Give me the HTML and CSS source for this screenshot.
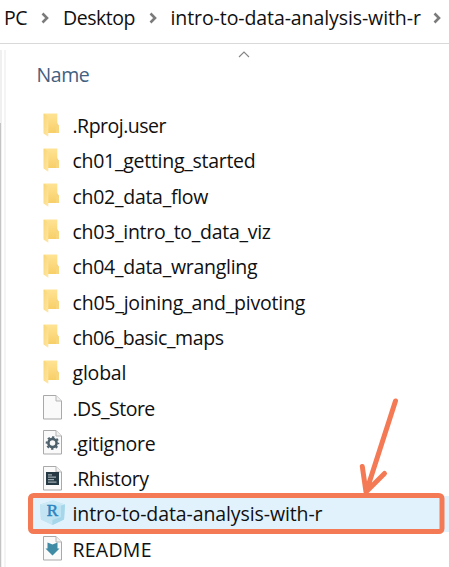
FILE: index.html
```
<!DOCTYPE html>
<html lang="en">
<head>
<meta charset="utf-8">
<title>intro-to-data-analysis-with-r</title>
<link rel="stylesheet" href="styles.css">
</head>
<body>
<svg class="defs" aria-hidden="true">
  <defs>
    <linearGradient id="back" x1="0" y1="0" x2="0" y2="1"><stop offset="0" stop-color="#ffe394"/><stop offset="1" stop-color="#f8cf67"/></linearGradient>
    <linearGradient id="flap" x1="0" y1="0" x2="1" y2="1"><stop offset="0" stop-color="#f8d575"/><stop offset="1" stop-color="#ffe7a5"/></linearGradient>
    <symbol id="folder" viewBox="0 0 28 28">
      <path d="M2 1.5H15.3V12L17 14V21H2Z" fill="url(#back)"/>
      <path d="M15.3 11L17 14V21H14V13Z" fill="#f8d67e"/>
      <path d="M1.5 1.5L6.3 4V24.8L1.5 21.5Z" fill="url(#flap)"/>
    </symbol>
    <symbol id="page" viewBox="0 0 28 28">
      <path d="M1.5 1.5H14L19.5 7V25H1.5Z" fill="#fafafa" stroke="#a9a9a9"/>
      <path d="M14 1.5V7H19.5" fill="#f1f1f1" stroke="#b5b5b5"/>
    </symbol>
  </defs>
</svg>
<header class="crumbs">
  <span class="crumb pc">PC</span>
  <svg class="chev" viewBox="0 0 8 12"><path d="M1.5 1.5L6 6L1.5 10.5"/></svg>
  <span class="crumb desktop">Desktop</span>
  <svg class="chev" viewBox="0 0 8 12"><path d="M1.5 1.5L6 6L1.5 10.5"/></svg>
  <span class="crumb project">intro-to-data-analysis-with-r</span>
  <svg class="chev" viewBox="0 0 8 12"><path d="M1.5 1.5L6 6L1.5 10.5"/></svg>
</header>
<main class="pane">
  <aside class="rail"><span class="thumb"></span></aside>
  <section class="files">
    <svg class="sort" viewBox="0 0 12 7"><path d="M1 6L6 1L11 6"/></svg>
    <div class="heading">Name</div>
    <ul class="list">
      <li><svg class="icon"><use href="#folder"/></svg><span class="tight">.Rproj.user</span></li>
      <li><svg class="icon"><use href="#folder"/></svg><span class="open">ch01_getting_started</span></li>
      <li><svg class="icon"><use href="#folder"/></svg><span class="open">ch02_data_flow</span></li>
      <li><svg class="icon"><use href="#folder"/></svg><span class="open">ch03_intro_to_data_viz</span></li>
      <li><svg class="icon"><use href="#folder"/></svg><span class="open">ch04_data_wrangling</span></li>
      <li><svg class="icon"><use href="#folder"/></svg><span class="wide">ch05_joining_and_pivoting</span></li>
      <li><svg class="icon"><use href="#folder"/></svg><span>ch06_basic_maps</span></li>
      <li><svg class="icon"><use href="#folder"/></svg><span class="wide">global</span></li>
      <li><svg class="icon"><use href="#page"/></svg><span class="tight">.DS_Store</span></li>
      <li><svg class="icon" viewBox="0 0 28 28"><use href="#page"/><circle cx="10.5" cy="14" r="4.1" fill="none" stroke="#4d606b" stroke-width="2.6"/><circle cx="10.5" cy="14" r="5.9" fill="none" stroke="#4d606b" stroke-width="1.8" stroke-dasharray="2.3 2.334" stroke-dashoffset="1.15"/></svg><span class="open">.gitignore</span></li>
      <li><svg class="icon" viewBox="0 0 28 28"><use href="#page"/><path d="M4 7H17V20H4Z" fill="#263a45"/><path d="M6 9.8H10M6 12.2H14M6 14.7H12M6 17.2H14.5" stroke="#9eacb3" stroke-width="1.2"/></svg><span>.Rhistory</span></li>
      <li class="selected"><svg class="icon cube" viewBox="0 0 28 28"><path d="M14 .5L26 4.5L25 19.5L13.5 25L2 19.5L1 4.5Z" fill="#b9e0f1"/><path d="M14 .5L26 4.5L13.5 8L1 4.5Z" fill="#cdeaf6"/><path d="M1 4.5L13.5 8V25L2 19.5Z" fill="#c3e5f3"/><path d="M13.5 8L26 4.5L25 19.5L13.5 25Z" fill="#a5d6ea"/><path d="M5 4.5H22V17L13.5 20L5 17Z" fill="#c3e5f3" opacity=".8"/><text x="7.8" y="16" class="mark">R</text></svg><span class="project-file">intro-to-data-analysis-with-r</span></li>
      <li><svg class="icon" viewBox="0 0 28 28"><use href="#page"/><path d="M5.5 7.5L10.5 9.5L15.5 7.5V13.5H17.5L10.5 20.5L3.5 13.5H5.5Z" fill="#3f8aa5"/></svg><span class="caps">README</span></li>
    </ul>
  </section>
</main>
<svg class="callout" viewBox="0 0 449 567">
  <rect x="30.5" y="495.5" width="411.5" height="36" rx="3"/>
  <path d="M395.5 401L366.5 491M362.3 466.5L366 492L384.5 473.5"/>
</svg>
</body>
</html>
```
FILE: styles.css
```
* { box-sizing: border-box; }
body {
  margin: 0;
  width: 449px;
  height: 567px;
  overflow: hidden;
  position: relative;
  background: #fff;
  color: #101010;
  font: 19.5px/35px "Open Sans", "Noto Sans", sans-serif;
}
.defs { position: absolute; width: 0; height: 0; }
.crumbs {
  display: flex;
  align-items: center;
  height: 44px;
  padding: 0 0 8px 4px;
  border-bottom: 1px solid #d9d9d9;
  white-space: nowrap;
}
.crumb { flex: none; }
.pc { width: 37px; letter-spacing: -.4px; }
.desktop { width: 86px; letter-spacing: -.45px; }
.project { width: 262px; letter-spacing: -.09px; }
.chev { flex: none; width: 8px; height: 12px; fill: none; stroke: #7b7b7b; stroke-width: 2.6; }
.chev + .desktop { margin-left: 14px; }
.chev + .project { margin-left: 13.5px; }
.pane { display: flex; height: 523px; }
.rail { width: 7px; margin-top: 6px; padding-top: 73px; background: linear-gradient(90deg, #f0f0f0 2px, #fff 2px, #fff 4px, #f4f4f4 4px, #f4f4f4 6px, #fff 6px); }
.thumb { display: block; width: 1px; height: 100%; background: #c4c4c4; }
.files { flex: 1; }
.sort { display: block; width: 12px; height: 7px; margin: 7px 0 0 231px; fill: none; stroke: #858585; stroke-width: 1.1; }
.heading { height: 50px; padding-left: 29.5px; line-height: 33px; color: #44607f; letter-spacing: -.4px; }
.list { list-style: none; margin: 0; padding: 0; }
.list li { display: flex; align-items: center; height: 35.3px; padding-left: 35px; white-space: nowrap; }
.list span { margin-left: 2.5px; letter-spacing: -.4px; }
.list .tight { letter-spacing: -.5px; }
.list .open { letter-spacing: -.28px; }
.list .wide { letter-spacing: -.2px; }
.list .project-file { letter-spacing: -.1px; }
.list .caps { letter-spacing: .25px; }
.icon { flex: none; width: 28px; height: 28px; overflow: visible; }
.cube { margin-left: -3px; margin-right: 3px; }
.mark { font: 17px "Liberation Serif", serif; fill: #2c84c0; stroke: #2c84c0; stroke-width: .5; }
.selected { background: linear-gradient(#e1f2fd, #e1f2fd) 22px 0 no-repeat; }
.callout { position: absolute; inset: 0; width: 449px; height: 567px; fill: none; stroke: #f47a55; stroke-width: 5; stroke-linecap: round; stroke-linejoin: round; }
```
